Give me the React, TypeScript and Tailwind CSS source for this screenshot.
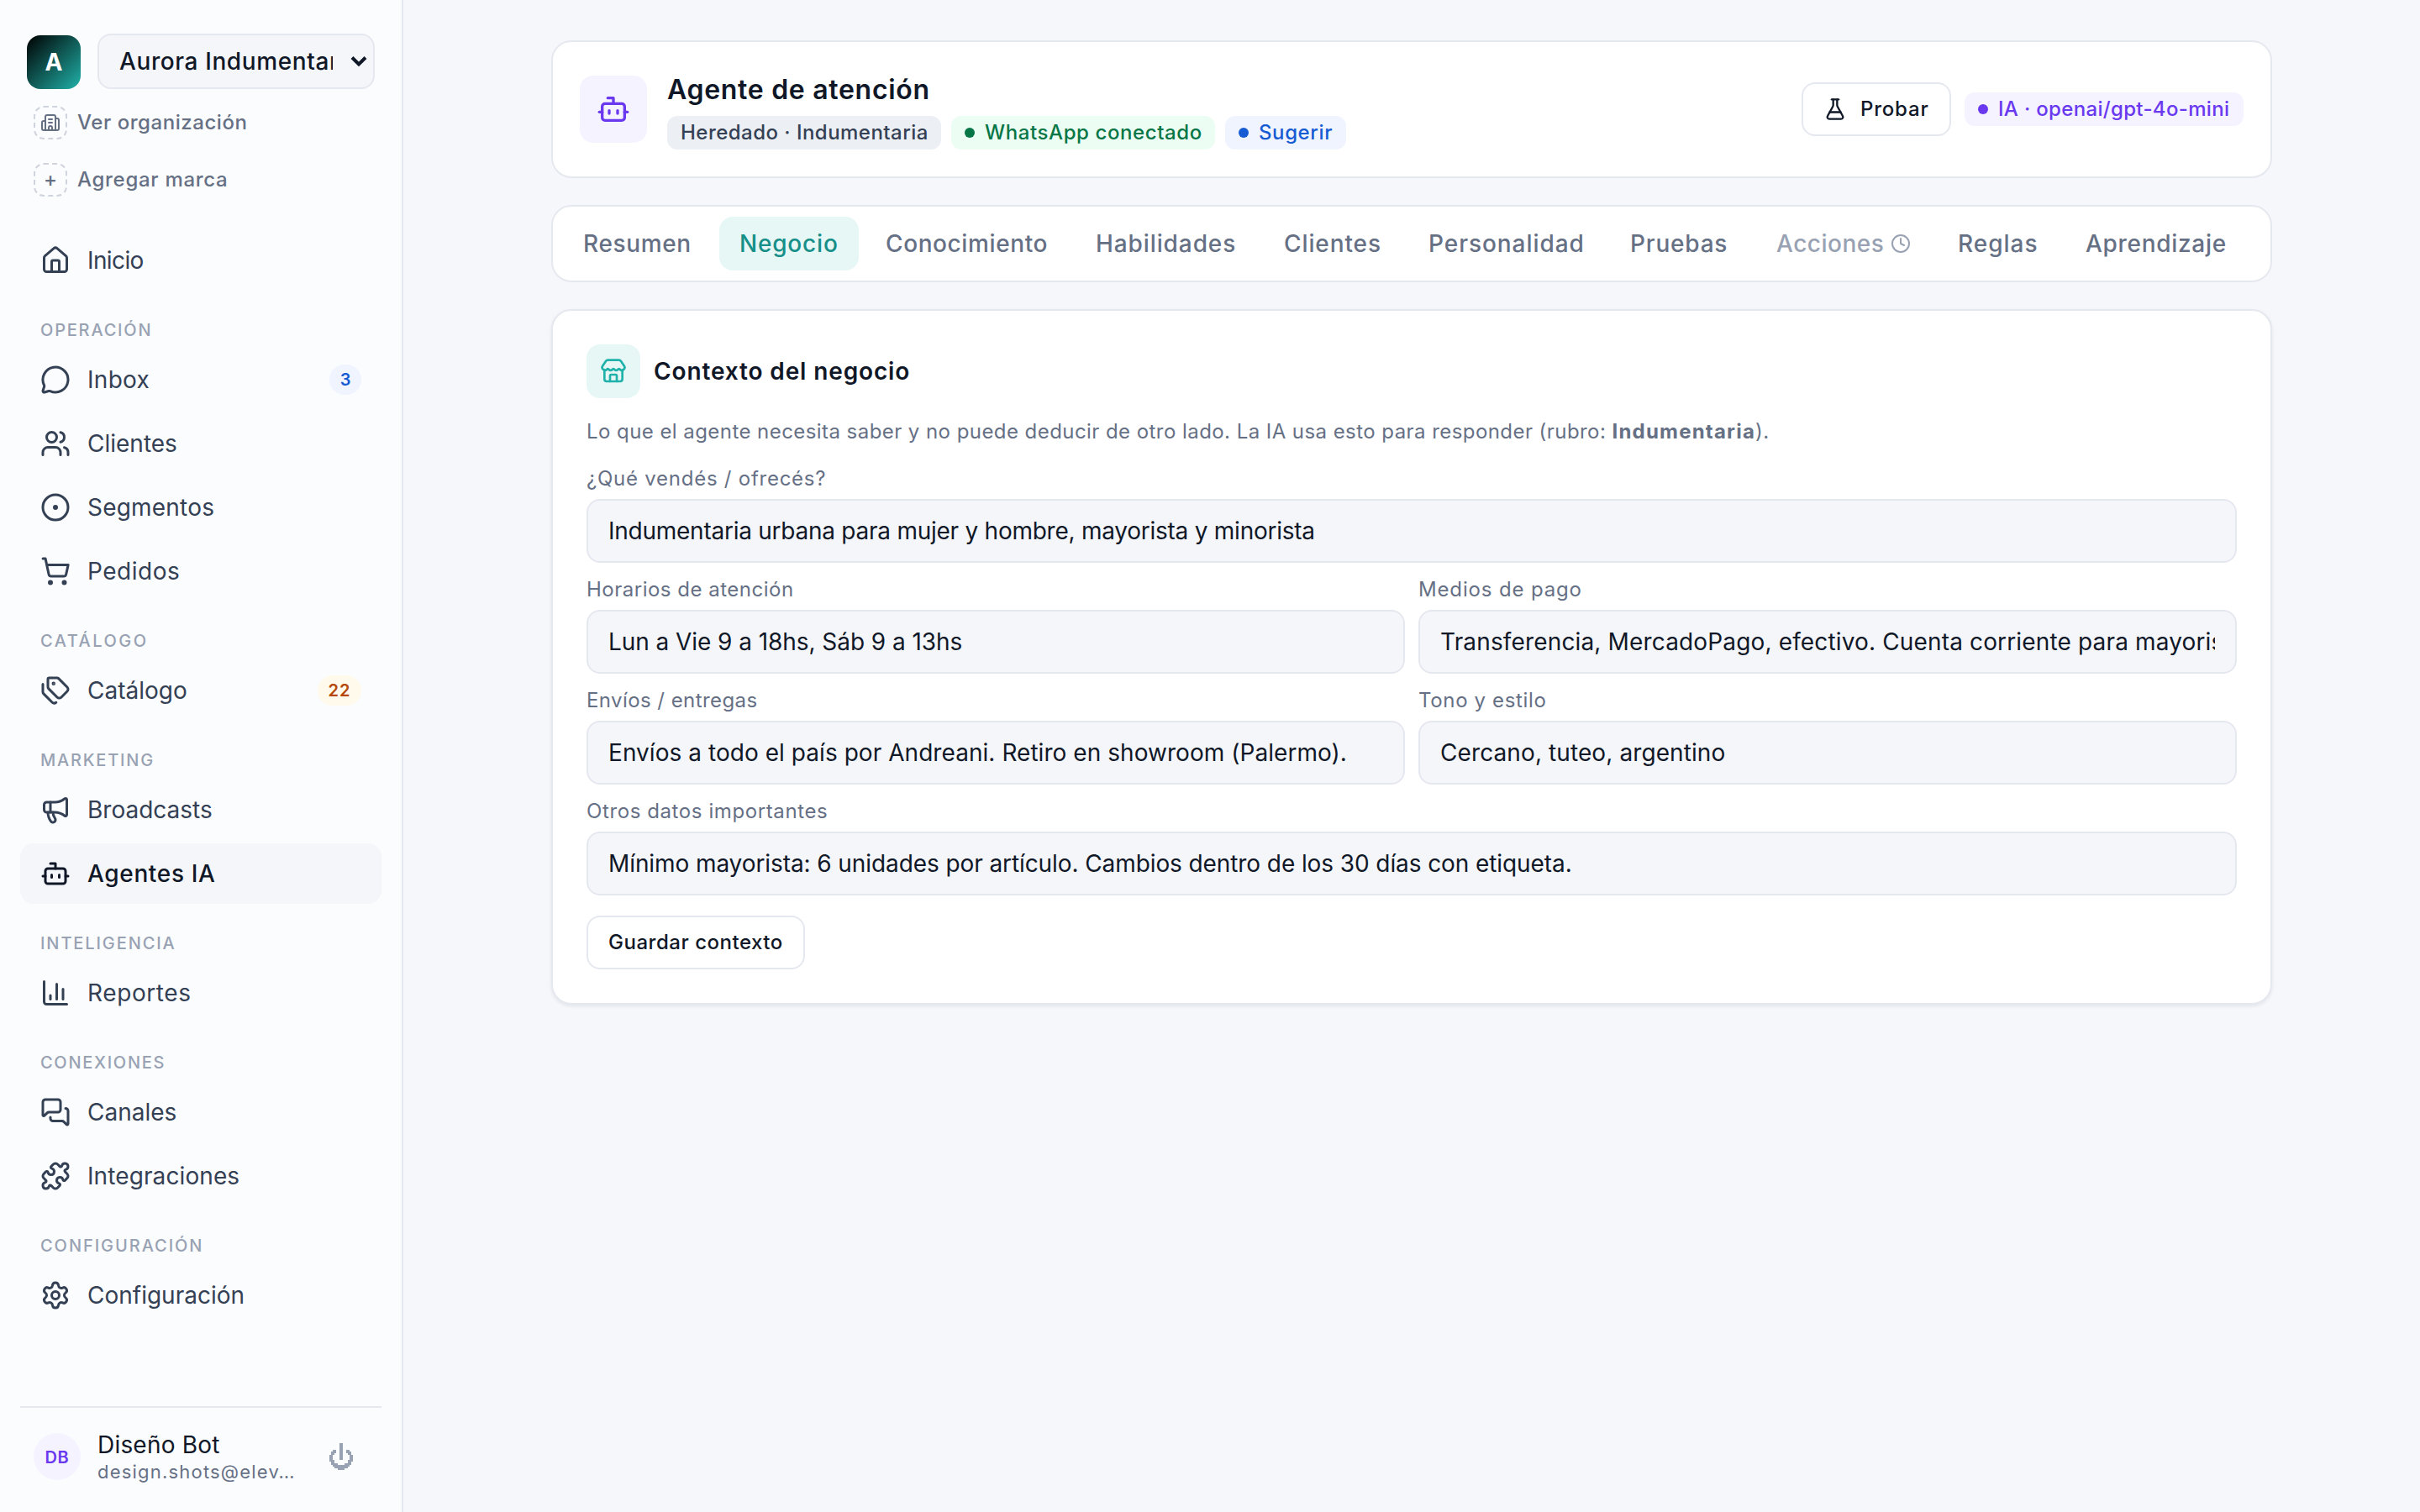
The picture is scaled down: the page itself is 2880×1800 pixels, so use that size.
import React from "react";
import {
  House, MessageCircle, Users, ShoppingCart, Tags, Megaphone,
  MessagesSquare, Puzzle, Settings, FlaskConical, Clock, Store, Building2,
} from "lucide-react";

type IconProps = { className?: string };
type IconType = React.ComponentType<IconProps>;

function Svg({ className, children }: IconProps & { children: React.ReactNode }) {
  return (
    <svg viewBox="0 0 24 24" fill="none" stroke="currentColor" strokeWidth={2} strokeLinecap="round" strokeLinejoin="round" className={className}>
      {children}
    </svg>
  );
}

function BotIcon(p: IconProps) {
  return (
    <Svg {...p}>
      <path d="M12 8V4H8" />
      <rect width="16" height="12" x="4" y="8" rx="2" />
      <path d="M2 14h2" />
      <path d="M20 14h2" />
      <path d="M15 13v2" />
      <path d="M9 13v2" />
    </Svg>
  );
}

function TargetDot(p: IconProps) {
  return (
    <Svg {...p}>
      <circle cx="12" cy="12" r="10" />
      <circle cx="12" cy="12" r="1" fill="currentColor" />
    </Svg>
  );
}

function ChartIcon(p: IconProps) {
  return (
    <Svg {...p}>
      <path d="M3 3v16a2 2 0 0 0 2 2h16" />
      <path d="M18 17V9" />
      <path d="M13 17V5" />
      <path d="M8 17v-3" />
    </Svg>
  );
}

type Item = { label: string; icon: IconType; tracking?: string; active?: boolean; badge?: string; tone?: string };
type Section = { title: string; tracking: string; items: Item[] };

const sections: Section[] = [
  {
    title: "OPERACIÓN",
    tracking: "tracking-[1.8px]",
    items: [
      { label: "Inbox", icon: MessageCircle, tracking: "tracking-[0.3px]", badge: "3", tone: "bg-[#eff4ff] text-[#175cd3] w-[38px]" },
      { label: "Clientes", icon: Users },
      { label: "Segmentos", icon: TargetDot, tracking: "tracking-[0.2px]" },
      { label: "Pedidos", icon: ShoppingCart, tracking: "tracking-[0.5px]" },
    ],
  },
  {
    title: "CATÁLOGO",
    tracking: "tracking-[2.5px]",
    items: [{ label: "Catálogo", icon: Tags, badge: "22", tone: "bg-[#fffaeb] text-[#b54708] w-[52px] tracking-[1px]" }],
  },
  {
    title: "MARKETING",
    tracking: "tracking-[1.8px]",
    items: [
      { label: "Broadcasts", icon: Megaphone },
      { label: "Agentes IA", icon: BotIcon, tracking: "tracking-[0.65px]", active: true },
    ],
  },
  { title: "INTELIGENCIA", tracking: "tracking-[1.9px]", items: [{ label: "Reportes", icon: ChartIcon, tracking: "tracking-[0.6px]" }] },
  {
    title: "CONEXIONES",
    tracking: "tracking-[1.7px]",
    items: [
      { label: "Canales", icon: MessagesSquare },
      { label: "Integraciones", icon: Puzzle, tracking: "tracking-[0.1px]" },
    ],
  },
  { title: "CONFIGURACIÓN", tracking: "tracking-[1.95px]", items: [{ label: "Configuración", icon: Settings }] },
];

function NavItem({ item }: { item: Item }) {
  const Icon = item.icon;
  return (
    <div
      className={
        item.active
          ? "flex h-[72px] items-center rounded-2xl bg-[#f5f6fa] px-6 font-medium text-[#101828]"
          : "flex h-[72px] items-center rounded-2xl px-6 text-[#344054]"
      }
    >
      <Icon className="h-9 w-9 shrink-0" />
      <span className={`ml-5 flex-1 text-[28px] leading-[42px] ${item.tracking ?? ""}`}>{item.label}</span>
      {item.badge && (
        <span className={`flex h-9 items-center justify-center rounded-full text-[20px] font-semibold ${item.tone}`}>{item.badge}</span>
      )}
    </div>
  );
}

function Sidebar() {
  return (
    <aside className="flex h-full w-[480px] shrink-0 flex-col border-r-2 border-[#e6e8f0] bg-[#fbfcfe] px-6">
      <div className="mt-10 flex gap-5 px-2">
        <div className="mt-0.5 flex h-16 w-16 shrink-0 items-center justify-center rounded-2xl bg-[linear-gradient(135deg,#000_0%,#20b2aa_100%)] text-[28px] font-bold text-white">
          A
        </div>
        <div className="flex h-[66px] w-[330px] items-center justify-between rounded-2xl border-2 border-[#e6e8f0] bg-[#f5f6fa] pl-6 pr-[7px]">
          <span className="w-[254px] overflow-hidden whitespace-nowrap text-[28px] font-medium leading-[42px] tracking-[0.6px] text-[#101828]">
            Aurora Indumentaria
          </span>
          <svg viewBox="0 0 20 14" className="h-[14px] w-5 text-[#101828]" fill="none" stroke="currentColor" strokeWidth="4">
            <path d="M2 2.5l8 8 8-8" />
          </svg>
        </div>
      </div>
      <div className="mt-5 flex h-10 items-center gap-3 px-4 text-[24px] font-medium text-[#667085]">
        <span className="flex h-10 w-10 items-center justify-center rounded-xl border-2 border-dashed border-[#d0d5dd]">
          <Building2 className="h-6 w-6" />
        </span>
        <span className="tracking-[0.55px]">Ver organización</span>
      </div>
      <div className="mt-7 flex h-10 items-center gap-3 px-4 text-[24px] font-medium text-[#667085]">
        <span className="flex h-10 w-10 items-center justify-center rounded-xl border-2 border-dashed border-[#d0d5dd]">+</span>
        <span className="tracking-[0.7px]">Agregar marca</span>
      </div>
      <nav className="mt-10">
        <NavItem item={{ label: "Inicio", icon: House, tracking: "tracking-[-0.6px]" }} />
        {sections.map((s) => (
          <div key={s.title}>
            <div className={`h-[70px] pl-6 pt-8 text-[20px] font-medium leading-[30px] text-[#98a2b3] ${s.tracking}`}>{s.title}</div>
            <div className="flex flex-col gap-1">
              {s.items.map((i) => (
                <NavItem key={i.label} item={i} />
              ))}
            </div>
          </div>
        ))}
      </nav>
      <div className="mt-auto flex h-[126px] border-t-2 border-[#e6e8f0] pl-4">
        <div className="mt-[30px] flex h-14 w-14 shrink-0 items-center justify-center rounded-full bg-[#f4f3ff] pt-px text-[20px] font-semibold tracking-[0.8px] text-[#6938ef]">
          DB
        </div>
        <div className="ml-5 mt-[23px] w-[240px]">
          <div className="text-[28px] leading-[42px] tracking-[0.2px] text-[#101828]">Diseño Bot</div>
          <div className="-mt-[5px] whitespace-nowrap text-[22px] leading-[33px] tracking-[1.2px] text-[#667085]">design.shots@elev…</div>
        </div>
        <svg viewBox="0 0 14 16" shapeRendering="crispEdges" className="ml-9 mt-[42px] h-8 w-7 text-[#98a2b3]" fill="currentColor">
          <path d="M6 0h2v10h-2zM2 4h2v2h-2zM10 4h2v2h-2zM1 5h2v2h-2zM11 5h2v2h-2zM0 7h2v4h-2zM12 7h2v4h-2zM1 10h2v3h-2zM11 10h2v3h-2zM2 12h3v2h-3zM9 12h3v2h-3zM3 13h8v2h-8zM5 15h4v1h-4z" />
        </svg>
      </div>
    </aside>
  );
}

function Pill({ tone, dot, children }: { tone: string; dot?: boolean; children: React.ReactNode }) {
  return (
    <span className={`flex h-10 items-center gap-3 whitespace-nowrap rounded-xl pl-4 text-[24px] font-medium ${tone}`}>
      {dot && <span className="h-3 w-3 rounded-full bg-current" />}
      {children}
    </span>
  );
}

function Header() {
  return (
    <div className="flex h-[164px] items-center rounded-3xl border-2 border-[#e6e8f0] bg-white px-8">
      <div className="flex h-20 w-20 items-center justify-center rounded-2xl bg-[#f4f3ff] text-[#6938ef]">
        <BotIcon className="h-10 w-10" />
      </div>
      <div className="ml-6 flex flex-1 flex-col gap-2">
        <div className="h-12 pt-px text-[32px] font-semibold leading-[48px] tracking-[0.7px] text-[#101828]">Agente de atención</div>
        <div className="flex gap-3">
          <Pill tone="w-[326px] bg-[#eceff4] tracking-[0.47px] text-[#344054]">Heredado · Indumentaria</Pill>
          <Pill dot tone="w-[314px] bg-[#ecfdf3] tracking-[0.6px] text-[#067647]">WhatsApp conectado</Pill>
          <Pill dot tone="w-[144px] bg-[#eff4ff] tracking-[0.6px] text-[#175cd3]">Sugerir</Pill>
        </div>
      </div>
      <div className="flex items-center gap-4">
        <button className="flex h-16 w-[178px] items-center gap-4 rounded-2xl border-2 border-[#e6e8f0] bg-white pl-6 text-[24px] font-medium tracking-[0.8px] text-[#101828]">
          <FlaskConical className="h-7 w-7" />
          Probar
        </button>
        <Pill dot tone="w-[332px] bg-[#f4f3ff] tracking-[0.33px] text-[#6938ef]">IA · openai/gpt-4o-mini</Pill>
      </div>
    </div>
  );
}

const tabs = [
  { label: "Resumen", look: "w-[178px] tracking-[0.65px] text-[#667085]" },
  { label: "Negocio", look: "w-[166px] tracking-[0.8px] bg-[#e6f7f6] text-[#178f89]" },
  { label: "Conocimiento", look: "w-[242px] tracking-[0.6px] text-[#667085]" },
  { label: "Habilidades", look: "w-[216px] tracking-[0.9px] text-[#667085]" },
  { label: "Clientes", look: "w-[164px] tracking-[0.9px] text-[#667085]" },
  { label: "Personalidad", look: "w-[232px] tracking-[0.95px] text-[#667085]" },
  { label: "Pruebas", look: "w-[166px] tracking-[0.8px] text-[#667085]" },
  { label: "Acciones", look: "w-[208px] tracking-[0.5px] text-[#98a2b3]", soon: true },
  { label: "Reglas", look: "w-[144px] tracking-[1px] text-[#667085]" },
  { label: "Aprendizaje", look: "tracking-[0.7px] text-[#667085]" },
];

function Tabs() {
  return (
    <div className="mt-8 flex h-[92px] items-center gap-2 rounded-3xl border-2 border-[#e6e8f0] bg-white px-3 text-[28px] font-medium">
      {tabs.map((t) => (
        <div key={t.label} className={`flex h-16 shrink-0 items-center justify-between rounded-2xl px-6 ${t.look}`}>
          {t.label}
          {t.soon && <Clock className="h-6 w-6" />}
        </div>
      ))}
    </div>
  );
}

type FieldProps = { label: string; value: string; labelTracking: string; valueTracking: string };

function Field({ label, value, labelTracking, valueTracking }: FieldProps) {
  return (
    <div className="min-w-0 flex-1">
      <div className={`flex h-14 items-center pt-[7px] text-[24px] leading-[36px] text-[#667085] ${labelTracking}`}>{label}</div>
      <div className="flex h-[76px] items-center rounded-2xl border-2 border-[#e6e8f0] bg-[#f5f6fa] px-6">
        <div className={`w-full overflow-hidden whitespace-nowrap text-[28px] leading-[42px] text-[#101828] ${valueTracking}`}>{value}</div>
      </div>
    </div>
  );
}

function BusinessCard() {
  return (
    <div className="mt-8 rounded-3xl border-2 border-[#e6e8f0] bg-white p-10 shadow-[0_2px_4px_rgba(16,24,40,0.08)]">
      <div className="flex items-center gap-4">
        <div className="flex h-16 w-16 items-center justify-center rounded-2xl bg-[#e6f7f6] text-[#20b2aa]">
          <Store className="h-8 w-8" />
        </div>
        <div className="text-[28px] font-semibold leading-[42px] tracking-[0.87px] text-[#101828]">Contexto del negocio</div>
      </div>
      <div className="mt-[22px] h-[42px] whitespace-nowrap text-[24px] leading-[36px] tracking-[0.44px] text-[#667085]">
        Lo que el agente necesita saber y no puede deducir de otro lado. La IA usa esto para responder (rubro:{" "}
        <b className="font-bold tracking-[1.2px]">Indumentaria</b>).
      </div>
      <Field
        label="¿Qué vendés / ofrecés?"
        labelTracking="tracking-[0.75px]"
        value="Indumentaria urbana para mujer y hombre, mayorista y minorista"
        valueTracking="tracking-[-0.25px]"
      />
      <div className="flex gap-4">
        <Field
          label="Horarios de atención"
          labelTracking="tracking-[0.5px]"
          value="Lun a Vie 9 a 18hs, Sáb 9 a 13hs"
          valueTracking="tracking-[-0.06px]"
        />
        <Field
          label="Medios de pago"
          labelTracking="tracking-[0.85px]"
          value="Transferencia, MercadoPago, efectivo. Cuenta corriente para mayoristas."
          valueTracking="tracking-[0.15px]"
        />
      </div>
      <div className="flex gap-4">
        <Field
          label="Envíos / entregas"
          labelTracking="tracking-[0.43px]"
          value="Envíos a todo el país por Andreani. Retiro en showroom (Palermo)."
          valueTracking="tracking-[0.05px]"
        />
        <Field label="Tono y estilo" labelTracking="tracking-[0.65px]" value="Cercano, tuteo, argentino" valueTracking="tracking-[0.1px]" />
      </div>
      <Field
        label="Otros datos importantes"
        labelTracking="tracking-[0.6px]"
        value="Mínimo mayorista: 6 unidades por artículo. Cambios dentro de los 30 días con etiqueta."
        valueTracking="tracking-[-0.09px]"
      />
      <button className="mt-6 flex h-16 w-[260px] items-center rounded-2xl border-2 border-[#e6e8f0] bg-white pl-6 text-[24px] font-medium tracking-[0.52px] text-[#101828]">
        Guardar contexto
      </button>
    </div>
  );
}

export default function App() {
  return (
    <div className="flex h-[1800px] w-[2880px] overflow-hidden bg-[#f5f7fb] font-['Inter',sans-serif]">
      <Sidebar />
      <main className="flex flex-1 justify-center pt-12">
        <div className="w-[2048px]">
          <Header />
          <Tabs />
          <BusinessCard />
        </div>
      </main>
    </div>
  );
}
